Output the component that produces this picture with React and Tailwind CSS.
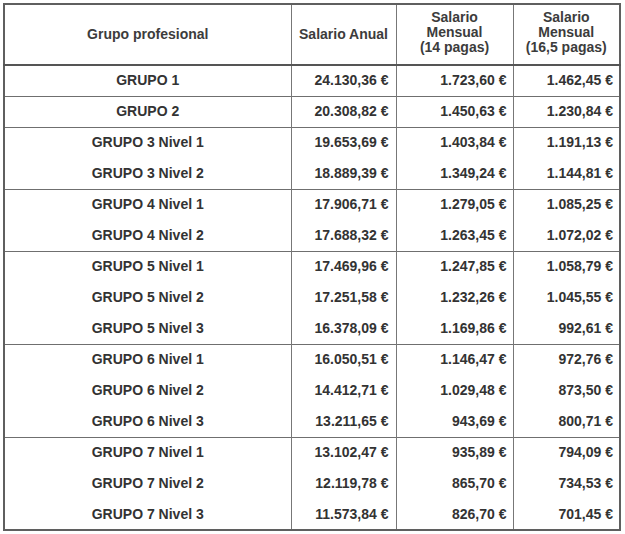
const groups = [
  [['GRUPO 1', '24.130,36 €', '1.723,60 €', '1.462,45 €']],
  [['GRUPO 2', '20.308,82 €', '1.450,63 €', '1.230,84 €']],
  [
    ['GRUPO 3 Nivel 1', '19.653,69 €', '1.403,84 €', '1.191,13 €'],
    ['GRUPO 3 Nivel 2', '18.889,39 €', '1.349,24 €', '1.144,81 €']
  ],
  [
    ['GRUPO 4 Nivel 1', '17.906,71 €', '1.279,05 €', '1.085,25 €'],
    ['GRUPO 4 Nivel 2', '17.688,32 €', '1.263,45 €', '1.072,02 €']
  ],
  [
    ['GRUPO 5 Nivel 1', '17.469,96 €', '1.247,85 €', '1.058,79 €'],
    ['GRUPO 5 Nivel 2', '17.251,58 €', '1.232,26 €', '1.045,55 €'],
    ['GRUPO 5 Nivel 3', '16.378,09 €', '1.169,86 €', '992,61 €']
  ],
  [
    ['GRUPO 6 Nivel 1', '16.050,51 €', '1.146,47 €', '972,76 €'],
    ['GRUPO 6 Nivel 2', '14.412,71 €', '1.029,48 €', '873,50 €'],
    ['GRUPO 6 Nivel 3', '13.211,65 €', '943,69 €', '800,71 €']
  ],
  [
    ['GRUPO 7 Nivel 1', '13.102,47 €', '935,89 €', '794,09 €'],
    ['GRUPO 7 Nivel 2', '12.119,78 €', '865,70 €', '734,53 €'],
    ['GRUPO 7 Nivel 3', '11.573,84 €', '826,70 €', '701,45 €']
  ]
];

export default function App() {
  return (
    <div className="h-[534px] w-[625px] bg-white pl-[3px] pt-[3px] font-['Liberation_Sans',Arial,sans-serif] text-[14px] font-bold text-[#333]">
      <table className="w-[616px] table-fixed border-collapse border-2 border-[#5f5f5f]">
        <colgroup>
          <col className="w-[287px]" />
          <col className="w-[105px]" />
          <col className="w-[117px]" />
          <col className="w-[107px]" />
        </colgroup>
        <thead>
          <tr className="h-[61px] border-b-2 border-[#555]">
            <th className="border-r border-[#777] font-bold text-[#3c3c3c]">Grupo profesional</th>
            <th className="border-r border-[#777] font-bold text-[#3c3c3c]">Salario Anual</th>
            <th className="border-r border-[#777] pb-[4px] font-bold leading-[15px] text-[#3c3c3c]">
              Salario
              <br />
              Mensual
              <br />
              (14 pagas)
            </th>
            <th className="pb-[4px] font-bold leading-[15px] text-[#3c3c3c]">
              Salario
              <br />
              Mensual
              <br />
              (16,5 pagas)
            </th>
          </tr>
        </thead>
        {groups.map((rows, gi) => (
          <tbody key={gi} className="border-b border-[#6f6f6f]">
            {rows.map((r) => (
              <tr key={r[0]} className="h-[31px]">
                <td className="border-r border-[#777] text-center">{r[0]}</td>
                <td className="border-r border-[#777] pr-[7px] text-right">{r[1]}</td>
                <td className="border-r border-[#777] pr-[6px] text-right">{r[2]}</td>
                <td className="pr-[6px] text-right">{r[3]}</td>
              </tr>
            ))}
          </tbody>
        ))}
      </table>
    </div>
  );
}
